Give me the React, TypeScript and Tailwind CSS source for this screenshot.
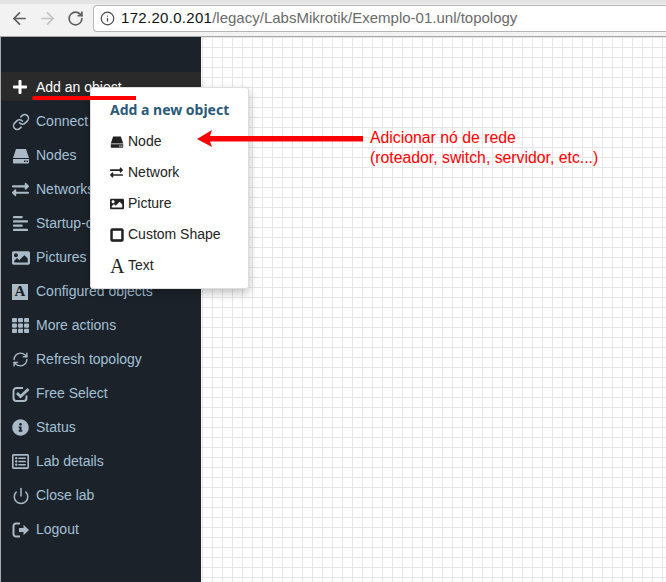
import { ArrowLeft, ArrowRight, Info, Link, Power, RefreshCw, RotateCw } from "lucide-react";
import {
  FaAlignLeft,
  FaExchangeAlt,
  FaImage,
  FaInfoCircle,
  FaPlus,
  FaRegListAlt,
  FaRegSquare,
  FaTh,
} from "react-icons/fa";

function HddIcon({ size }: { size: number }) {
  return (
    <svg width={size} height={size} viewBox="0 0 18 18" fill="currentColor">
      <path d="M4 2h10l3 9H1z" />
      <path fillRule="evenodd" d="M1 12h16v3.5a1 1 0 0 1-1 1H2a1 1 0 0 1-1-1zM12 13.5h1.5V15H12zM14.5 13.5H16V15h-1.5z" />
    </svg>
  );
}

function LogoutIcon() {
  return (
    <svg width={18} height={18} viewBox="0 0 18 18" fill="currentColor">
      <path d="M8 2.5H4A2.5 2.5 0 0 0 1.500 5v8A2.500 2.500 0 0 0 4 15.500h4" fill="none" stroke="currentColor" strokeWidth="2" />
      <path d="M7 7h4.500V3.800L17 9l-5.500 5.200V11H7z" />
    </svg>
  );
}

function CheckIcon() {
  return (
    <svg width={18} height={18} viewBox="0 0 18 18" fill="none" stroke="currentColor">
      <path d="M14.500 10.500V13a3 3 0 0 1-3 3H4.500a3 3 0 0 1-3-3V6a3 3 0 0 1 3-3H11" strokeWidth="2" />
      <path d="M5 8l3.500 3.500L16.500 4" strokeWidth="2.800" />
    </svg>
  );
}

const sidebarItems = [
  { label: "Connect", icon: <Link size={18} strokeWidth={2} /> },
  { label: "Nodes", icon: <HddIcon size={18} /> },
  { label: "Networks", icon: <FaExchangeAlt size={17} /> },
  { label: "Startup-config", icon: <FaAlignLeft size={17} /> },
  { label: "Pictures", icon: <FaImage size={18} /> },
  {
    label: "Configured objects",
    icon: (
      <span className="w-[16px] h-[16px] bg-[#a9bac6] text-[#1b2229] flex items-center justify-center font-['Liberation_Serif',serif] font-bold text-[15px] leading-none">
        A
      </span>
    ),
  },
  { label: "More actions", icon: <FaTh size={17} /> },
  { label: "Refresh topology", icon: <RefreshCw size={17} strokeWidth={2} /> },
  { label: "Free Select", icon: <CheckIcon /> },
  { label: "Status", icon: <FaInfoCircle size={17} /> },
  { label: "Lab details", icon: <FaRegListAlt size={17} /> },
  { label: "Close lab", icon: <Power size={18} strokeWidth={2} /> },
  { label: "Logout", icon: <LogoutIcon /> },
];

const menuItems = [
  { label: "Node", icon: <HddIcon size={14} /> },
  { label: "Network", icon: <FaExchangeAlt size={13} /> },
  { label: "Picture", icon: <FaImage size={14} /> },
  { label: "Custom Shape", icon: <FaRegSquare size={14} className="stroke-[40px] stroke-current" /> },
  {
    label: "Text",
    icon: <span className="font-['Liberation_Serif',serif] text-[20px] leading-none">A</span>,
  },
];

function App() {
  return (
    <div className="w-[666px] h-[582px] overflow-hidden relative bg-white font-['Liberation_Sans',sans-serif]">
      {/* Browser bar */}
      <div className="h-[37px] bg-[#f2f2f2] border-b border-[#a8a8a8] border-t-[4px] border-t-[#e4e4e4] flex items-center pl-[10px] pb-[4px]">
        <ArrowLeft size={19} strokeWidth={2.2} className="text-[#5f5f5f]" />
        <ArrowRight size={19} strokeWidth={2.2} className="text-[#c4c4c4] ml-[9px]" />
        <RotateCw size={17} strokeWidth={2.4} className="text-[#5f5f5f] ml-[10px]" />
        <div className="ml-[9px] flex-1 h-[27px] bg-white border border-[#b5b5b5] border-r-0 rounded-l-[4px] flex items-center pl-[6px] text-[15px]">
          <Info size={15} className="text-[#4a4a4a] mr-[6px]" />
          <span className="text-[#111] tracking-[0.3px]">172.20.0.201</span>
          <span className="text-[#6a6a6a]">/legacy/LabsMikrotik/Exemplo-01.unl/topology</span>
        </div>
      </div>

      <div className="flex h-[545px]">
        {/* Sidebar */}
        <div className="w-[201px] h-full bg-[#1b2229] border-l border-[#aaa] pt-[35px] shrink-0 text-[14px] text-[#a3c0d6]">
          <div className="h-[29px] bg-[#2a2a2a] flex items-center text-white mb-[5px] pt-[1px]">
            <span className="w-[35px] pl-[11px] shrink-0">
              <FaPlus size={16} />
            </span>
            Add an object
          </div>
          {sidebarItems.map((item) => (
            <div key={item.label} className="h-[34px] flex items-center pb-[3px]">
              <span className="w-[35px] pl-[11px] shrink-0 text-[#a9bac6]">{item.icon}</span>
              {item.label}
            </div>
          ))}
        </div>

        {/* Canvas grid */}
        <div className="flex-1 h-full bg-white bg-[linear-gradient(#e6e6e6_1px,transparent_1px),linear-gradient(90deg,#e6e6e6_1px,transparent_1px)] bg-[size:10px_10px] bg-[position:1px_0px]" />
      </div>

      {/* Add object menu */}
      <div className="absolute left-[90px] top-[87px] w-[159px] h-[202px] bg-white rounded-[3px] border border-[#ddd] shadow-[0_4px_10px_rgba(0,0,0,0.25)] text-[14px] text-[#222]">
        <div className="pl-[19px] pt-[13px] h-[38px] text-[14px] font-bold text-[#2a5a78] font-['Noto_Sans',sans-serif] leading-[18px]">
          Add a new object
        </div>
        {menuItems.map((item) => (
          <div key={item.label} className="h-[31px] flex items-center pl-[19px]">
            <span className="w-[18px] shrink-0 text-[#222] flex items-center">{item.icon}</span>
            {item.label}
          </div>
        ))}
      </div>

      {/* Red annotations */}
      <div className="absolute left-[32px] top-[96px] w-[104px] h-[4px] rounded-l-[2px] bg-[#fe0000]" />
      <svg className="absolute left-[195px] top-[126px]" width="170" height="24" viewBox="0 0 170 24">
        <path d="M2 13 L17 4 L15 10 L168 10 L168 15.500 L15 15.500 L17 21 Z" fill="#fe0000" />
      </svg>
      <div className="absolute left-[370px] top-[128px] text-[15.800px] leading-[20px] text-[#fe0000]">
        Adicionar nó de rede
        <br />
        (roteador, switch, servidor, etc...)
      </div>
    </div>
  );
}

export default App;
